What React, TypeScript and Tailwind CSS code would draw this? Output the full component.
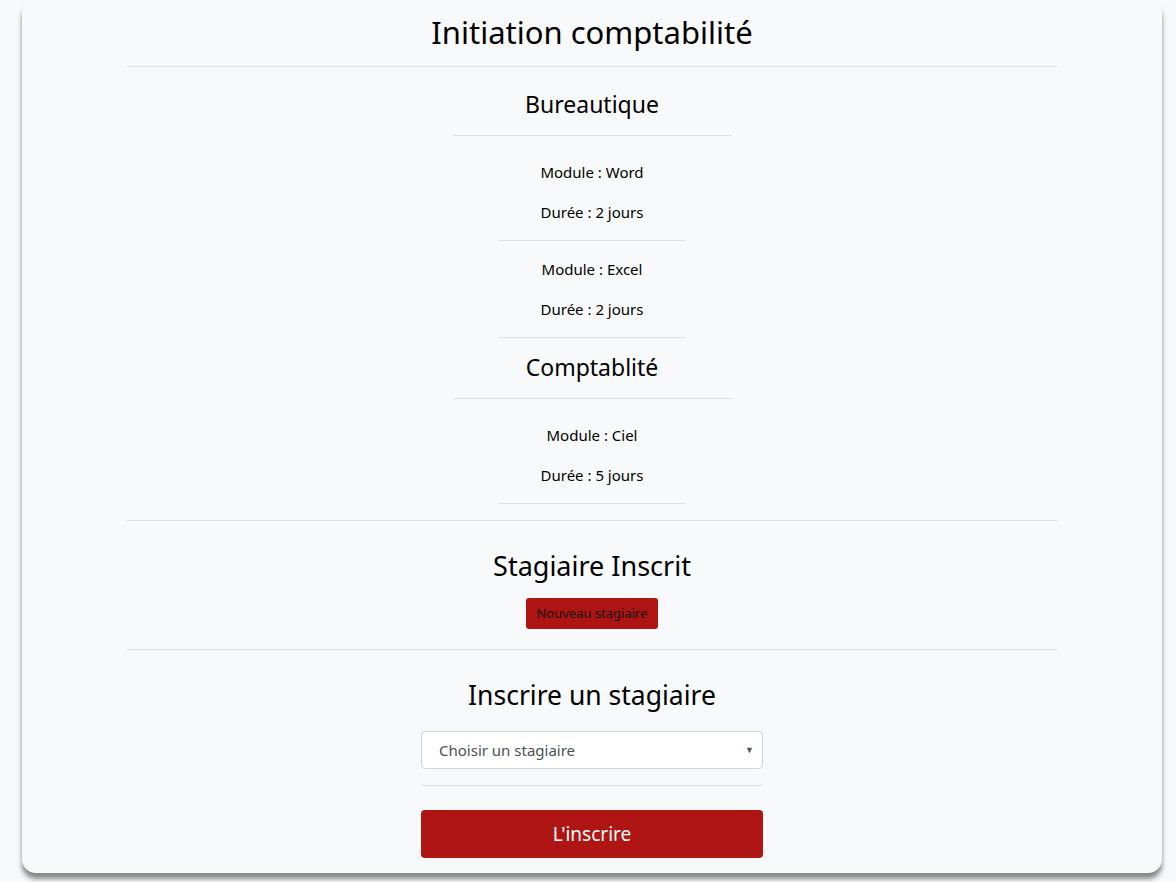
import React from 'react';

const font = { fontFamily: '"Noto Sans", "Open Sans", sans-serif' };

const ModuleBlock: React.FC<{ name: string; days: number; first?: boolean }> = ({ name, days, first }) => (
  <div className={`flex flex-col items-center ${first ? 'pt-[26px]' : 'pt-[18px]'}`}>
    <p className="text-[15px] leading-[20px] text-black">Module : {name}</p>
    <p className="mt-[20px] text-[15px] leading-[20px] text-black">Durée : {days} jours</p>
    <div className="mt-[18px] w-[186px] border-t border-[#dee2e6]" />
  </div>
);

const App: React.FC = () => {
  return (
    <div className="min-h-[883px] bg-[#f8f9fa]" style={font}>
      <div className="ml-[22px] w-[1140px] h-[874px] -mt-[1px] rounded-[14px] bg-[#f8f9fa] shadow-[0_6px_5px_rgba(0,0,0,0.45)] flex flex-col items-center">
        <div className="w-[930px] flex flex-col items-center">
          {/* Formation */}
          <h1 className="h-[67px] flex items-center justify-center text-[31px] text-black">Initiation comptabilité</h1>
          <div className="w-full border-t border-[#dee2e6]" />

          <h2 className="mt-[23px] text-[23px] leading-[28px] text-black">Bureautique</h2>
          <div className="mt-[17px] w-[279px] border-t border-[#dee2e6]" />
          <ModuleBlock name="Word" days={2} first />
          <ModuleBlock name="Excel" days={2} />

          <h2 className="mt-[15px] text-[23px] leading-[28px] text-black">Comptablité</h2>
          <div className="mt-[17px] w-[279px] border-t border-[#dee2e6]" />
          <ModuleBlock name="Ciel" days={5} first />

          <div className="mt-[16px] w-full border-t border-[#dee2e6]" />

          {/* Stagiaires */}
          <h2 className="mt-[28px] text-[27px] leading-[34px] text-black">Stagiaire Inscrit</h2>
          <button className="mt-[15px] h-[31px] px-[10px] rounded-[3px] bg-[#ad1412] text-[13px] text-[#111]">
            Nouveau stagiaire
          </button>
          <div className="mt-[20px] w-full border-t border-[#dee2e6]" />

          <h2 className="mt-[28px] text-[26.5px] leading-[34px] text-black">Inscrire un stagiaire</h2>
          <div className="mt-[19px] w-[342px] h-[38px] rounded-[4px] border border-[#ced4da] bg-white flex items-center justify-between pl-[17px] pr-[8px]">
            <span className="text-[15px] text-[#495057]">Choisir un stagiaire</span>
            <span className="text-[9px] text-[#555]">▼</span>
          </div>
          <div className="mt-[16px] w-[342px] border-t border-[#dee2e6]" />
          <button className="mt-[24px] w-[342px] h-[48px] rounded-[4px] bg-[#ae1513] text-[19px] text-white">
            L'inscrire
          </button>
        </div>
      </div>
    </div>
  );
};

export default App;
